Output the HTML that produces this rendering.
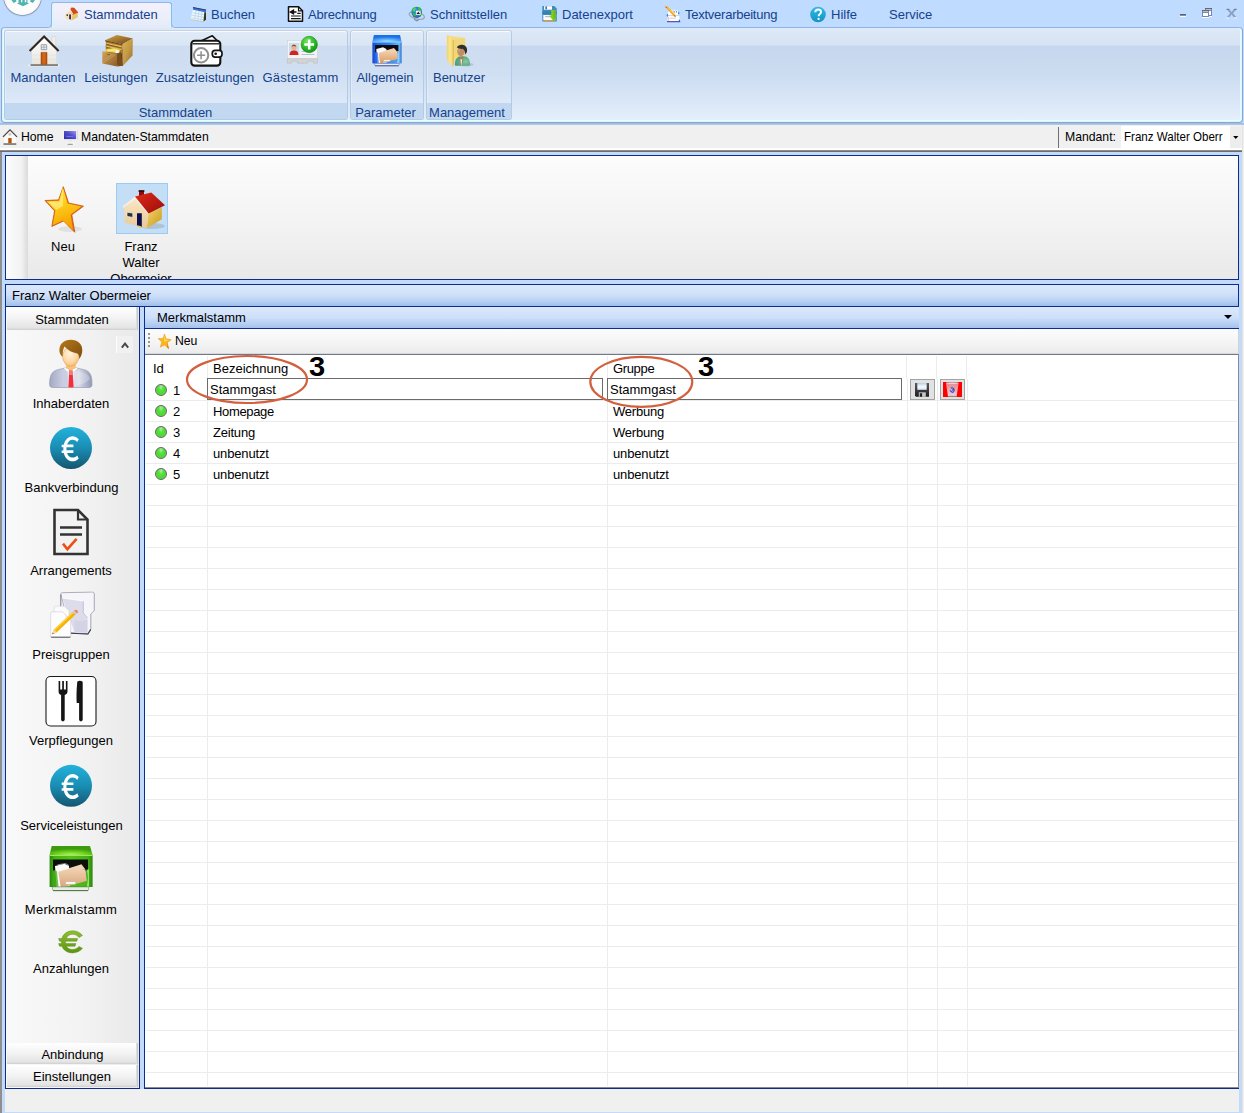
<!DOCTYPE html>
<html><head><meta charset="utf-8">
<style>
*{box-sizing:border-box;margin:0;padding:0}
html,body{width:1244px;height:1113px;overflow:hidden}
body{position:relative;background:#bfdbff;font-family:"Liberation Sans",sans-serif;font-size:13px;color:#000}
.a{position:absolute}
.t{position:absolute;white-space:nowrap;line-height:16px}
.c{position:absolute;white-space:nowrap;line-height:16px;text-align:center}
.rt{color:#15428b}
.seg{font-size:13px;transform:scaleX(.94);transform-origin:0 0}
.grp{border:1px solid #b4cbe6;border-top-color:#c3d2e4;border-radius:3px;background:linear-gradient(rgba(255,255,255,.12),rgba(255,255,255,.06));box-shadow:inset 0 1px 0 rgba(255,255,255,.75),inset 1px 0 0 rgba(255,255,255,.3)}
.grp i{position:absolute;left:0;right:0;bottom:0;height:16px;background:#c1d8f0;border-radius:0 0 2px 2px}
svg{position:absolute;overflow:visible}
.sb{position:absolute;left:7px;width:131px;height:21px;background:linear-gradient(#ffffff,#f4f4f4 45%,#e4e4e4 90%,#cfcfcf);border-right:1px solid #c9c9c9;box-shadow:inset -1px 0 0 #dedede}
.dot{position:absolute;left:155px;width:12px;height:12px;border-radius:50%;background:radial-gradient(ellipse at 50% 18%,#b4ecaa 0,#5be044 32%,#46dc2e 60%,#62ea3e 85%,#7cf04e 100%);border:1px solid #6c626c}
</style></head><body>
<!-- ===== top tab strip ===== -->
<div class="a" style="left:0;top:0;width:1244px;height:125px;background:#bfdbff"></div>
<!-- orb -->
<div class="a" style="left:4px;top:-22px;width:37px;height:37px;border-radius:50%;background:radial-gradient(circle at 50% 62%,#ffffff 0,#fbfbfc 50%,#e3e6ea 72%,#bfc5cf 90%,#9aa2b0 100%);box-shadow:0 0 0 .8px #8e97a8,0 1px 1.500px rgba(90,100,130,.45)"></div>
<svg style="left:10px;top:0" width="26" height="7" viewBox="0 0 26 7"><path d="M1.500 0h4.500l.5 1.500L3.500 3zM8.500 0h2.500v2.200h1.300V0h2.500v2.200h1.500v-2.200h1.200v3l1.800.2-6.300 3-6.300-3 1.800-.2zM20.500 0h4.500l-2.200 3-2.800-1.500z" fill="#4fb5b0"/></svg>
<!-- ribbon body -->
<div class="a" style="left:0;top:123px;width:1244px;height:2px;background:linear-gradient(#9db8df,#b3ccee)"></div>
<div class="a" id="ribbon" style="left:1px;top:27px;width:1242px;height:96px;border:1px solid #8aa6ce;border-top-color:#8fb3e4;border-radius:4px;background:linear-gradient(#dfe9f7 0,#d6e3f3 17px,#c7d8ee 18px,#cbdcf1 45px,#d9e6f7 72px,#e6f0fd 94px);box-shadow:inset 1px 0 0 #cdfdff,inset -1px 0 0 #cdfdff,inset 0 -1px 0 #cdfdff,inset 2px 0 0 #f1f6fd,inset -2px 0 0 #f1f6fd,inset 0 -2px 0 #f4f9fe"></div>
<!-- active tab -->
<div class="a" id="tab" style="left:51px;top:2px;width:121px;height:26px;border:1px solid #92b7e6;border-bottom:none;border-radius:3px 3px 0 0;background:linear-gradient(#f3f0fb,#eceefa 60%,#e2eaf8);box-shadow:inset 1px 0 0 #d4fbff,inset -1px 0 0 #d4fbff"></div>
<svg style="left:46px;top:20px" width="132" height="9" viewBox="46 20 132 9"><path d="M48.500 27.500Q51.500 27.500 51.500 23.500V28.500H48.500z" fill="#e2eaf8"/><path d="M48.500 27.500Q51.500 27.500 51.500 23.500" fill="none" stroke="#92b7e6" stroke-width="1"/><path d="M174.500 27.500Q171.500 27.500 171.500 23.500V28.500H174.500z" fill="#e2eaf8"/><path d="M174.500 27.500Q171.500 27.500 171.500 23.500" fill="none" stroke="#92b7e6" stroke-width="1"/></svg>
<div class="t rt" style="left:84px;top:7px">Stammdaten</div>
<div class="t rt" style="left:211px;top:7px">Buchen</div>
<div class="t rt" style="left:308px;top:7px;letter-spacing:-.15px">Abrechnung</div>
<div class="t rt" style="left:430px;top:7px">Schnittstellen</div>
<div class="t rt" style="left:562px;top:7px">Datenexport</div>
<div class="t rt" style="left:685px;top:7px;letter-spacing:-.25px">Textverarbeitung</div>
<div class="t rt" style="left:831px;top:7px">Hilfe</div>
<div class="t rt" style="left:889px;top:7px">Service</div>
<!-- TABICONS -->
<svg style="left:0;top:0" width="900" height="28" viewBox="0 0 900 28"><defs>
<radialGradient id="tGlobe" cx=".4" cy=".35" r=".7"><stop offset="0" stop-color="#9be070"/><stop offset=".6" stop-color="#3f9a5a"/><stop offset="1" stop-color="#2a6aa8"/></radialGradient>
<linearGradient id="tHelp" x1="0" y1="0" x2="0" y2="1"><stop offset="0" stop-color="#2dbbe8"/><stop offset="1" stop-color="#1593c2"/></linearGradient>
</defs>
<!-- tab house -->
<path d="M71.200 7.600h2.200v3h-2.200z" fill="#b8441c"/>
<path d="M70 9L65.300 14.300 66 19l5.500 1.600 1-6.500z" fill="#f7ddb0"/>
<path d="M72.500 14.100L77.800 12v5.200l-6.300 3.400z" fill="#e9c46a"/>
<path d="M70 8.800l4.200-1 4.200 4.600-6 2.300z" fill="#d24a1c"/>
<path d="M70 8.800L65 14l.5.700L70 10.400l2.500 4 .6-.6z" fill="#f8f0e2"/>
<path d="M69.200 14.500h1.700v5l-1.700-.5z" fill="#14226a"/><path d="M66.500 14.300l1.500.2v1.600l-1.500-.3z" fill="#2a3040"/>
<!-- calendar -->
<path d="M193 9l11.500 2.300v8.200l-1.500 1.700-12.300-2z" fill="#f1f6fb"/>
<path d="M192.600 12.800l11.500 2M192 15.300l12 2M191.400 17.800l12 2M196 10.500l-1.300 9M199 11l-1.300 9.400M202 11.600l-1.200 9.400" stroke="#b5d6ee" stroke-width=".8"/>
<path d="M193 7.200l13 2.600v2.600l-13-2.600z" fill="#3576e2"/>
<path d="M193 7l13 2.600v1l-13-2.600z" fill="#3b3f55"/>
<path d="M204.400 12.100l1.600.3v7.300l-2.600 1.800z" fill="#3e3518"/>
<path d="M190.700 19.200l12.300 2 .5.700-13.300-2z" fill="#c9c2b2"/>
<!-- abrechnung doc -->
<path d="M288.500 6.800h10l4 4V21.300h-14z" fill="#fff" stroke="#111" stroke-width="1.500" stroke-linejoin="round"/>
<path d="M298.500 6.800v4h4" fill="none" stroke="#111" stroke-width="1.200"/>
<path d="M290.500 12h3l0-2 0 0M293.500 10.200v3.600l-3.200-1.800zM293 12h3.500" stroke="#111" stroke-width="1.300" fill="#111"/>
<path d="M297.300 13.300h3.400M291 16h9.700M291 18.700h9.700" stroke="#111" stroke-width="1.200"/>
<!-- globe -->
<ellipse cx="416.800" cy="15.600" rx="7.800" ry="3.400" transform="rotate(14 416.800 15.600)" fill="none" stroke="#a3a6aa" stroke-width="1.300"/>
<path d="M414 19.300l2.800 1.500 2-1" stroke="#8c8f94" stroke-width="1.200" fill="none"/>
<circle cx="416.700" cy="12.100" r="5.400" fill="#2b7bd2"/>
<path d="M412.200 9.300c1-1.500 2.400-2.300 3.600-2.500l.6 1.200-1.600 1.700.6 1.600-1.600 1.200-1.600-.5zM418.200 7c1.600.3 2.800 1.200 3.500 2.400l-1.500 1.200-2.500-1.200zM412.800 13.300l2.200.5 1 2.500-1 1c-1.200-.8-2.200-2.200-2.200-4zM420.800 13.300l1.200-.5c0 1.600-.7 3-1.700 3.900l-1.300-1.400z" fill="#2cc63c"/>
<path d="M412.800 9.500c1.800-1.700 3.600-1.500 4.500-.4-1.400.4-2.600 1.400-3.200 3z" fill="#8ed0f4" opacity=".5"/>
<path d="M415.800 10.600h4.900v4.300h-4.900z" fill="#f0ece6"/><path d="M416.400 14l1.900-2.300 1.800 2.300z" fill="#1c1c1c"/><path d="M419.600 10.800h.9v.9h-.9z" fill="#f08a50"/>
<path d="M413 15.800c2 2 5.500 2 7.500 0" stroke="#1e5aa8" stroke-width="1" fill="none"/>
<!-- floppy + green arrow -->
<path d="M542.300 6.600c0-.4.300-.6.600-.6h11.400l2.500 2.500v12.200c0 .4-.3.700-.7.700h-13.200c-.3 0-.6-.3-.6-.7z" fill="#3f8dc0"/>
<path d="M542.300 11.500h14.500v2.500h-14.500z" fill="#3680b4"/>
<path d="M544 6.200h8v3.500h-8z" fill="#fdfdfd"/><path d="M545.300 6.600h1.700v2.700h-1.700z" fill="#2f7eb2"/>
<path d="M543.300 15h12v5h-12z" fill="#fcfcfc"/><path d="M545 16.700h5" stroke="#a8a8b8" stroke-width=".9"/>
<path d="M543.300 20h12v1.200h-12z" fill="#e09a30"/>
<path d="M551.200 9.900h4.400v5.500h1.500l-3.400 5.800-4.600-5.800h2.100z" fill="#7fcb20"/>
<path d="M553.400 9.900h2.200v5.500h1.500l-3.400 5.800z" fill="#6dbb1c"/>
<!-- text icon -->
<path d="M668 11.500h10.500l1.500 9.700h-13z" fill="#fdfdfe"/>
<path d="M669.500 9.800l.8 2.500M671.800 9.600l.8 2.500M674.300 9.600l.8 2.500M676.700 9.800l.8 2.500" stroke="#fbfbfd" stroke-width="1.100"/>
<path d="M671.300 11.300v1.200M674.300 11.300v1.200M676.500 11.300v1.200" stroke="#3a5ab8" stroke-width=".9"/>
<path d="M667.200 15.500h12.600" stroke="#c6cbe6" stroke-width=".8"/>
<ellipse cx="667.400" cy="15.300" rx=".7" ry="1.500" fill="#2a8cf0"/><ellipse cx="678.700" cy="13" rx=".7" ry="1.500" fill="#2a8cf0"/>
<path d="M668.200 17v4" stroke="#f6a8b0" stroke-width="1"/>
<path d="M669.500 18.300h6" stroke="#c8c8cc" stroke-width=".8"/>
<path d="M667 21.200h13.200v1h-13.200z" fill="#2f3aa6"/><path d="M679 19l1.200 2.200h-1.500z" fill="#2f3aa6"/>
<path d="M665.500 7.300l1.600-1.400 8 8.700-1.600 1.400z" fill="#f3a90c"/><path d="M666.300 6.600l.8-.7 8 8.700-.8.700z" fill="#fbc43a"/>
<path d="M664.300 6.500c.4-.8 1.200-1.200 2-.8l.8.200-1.600 1.400z" fill="#f7b4a4"/><path d="M665.500 7.300l.6-.5.700.8-.6.500z" fill="#4a4a4a"/>
<path d="M673.500 16l1.600-1.400.9 3z" fill="#c9703a"/>
<!-- help -->
<circle cx="818" cy="14.500" r="7.800" fill="url(#tHelp)"/>
<path d="M815.300 12.300c0-1.800 1.300-2.800 2.900-2.800s2.800 1 2.800 2.500c0 2.100-2.400 2.200-2.400 4.200" fill="none" stroke="#fff" stroke-width="1.900"/><circle cx="818.600" cy="18.900" r="1.150" fill="#fff"/>
</svg>
<!-- /TABICONS -->
<!-- window controls -->
<div class="a" style="left:1180px;top:14px;width:6px;height:3px;background:linear-gradient(#60606a 0,#60606a 1px,#8292ad 1px,#8292ad 2px,#fafcff 2px)"></div>
<svg style="left:1201px;top:7px" width="12" height="12" viewBox="1201 7 12 12">
<rect x="1205.500" y="8.500" width="6" height="7" fill="#fff" stroke="#6f87b2" stroke-width="1"/><path d="M1205 8.500h7" stroke="#6b6464" stroke-width="1"/><path d="M1206 9.500h5v1.500h-5z" fill="#6f87b2"/><path d="M1209 16.500h3" stroke="#fafcff" stroke-width="1"/>
<rect x="1202.500" y="10.500" width="6" height="6" fill="#fff" stroke="#6f87b2" stroke-width="1"/><path d="M1202 10.500h7" stroke="#6b6464" stroke-width="1"/><path d="M1203 11.500h5v1.500h-5z" fill="#6f87b2"/><path d="M1202 17.500h7" stroke="#fafcff" stroke-width="1"/>
</svg>
<svg style="left:1225px;top:7px" width="14" height="12" viewBox="1225 7 14 12">
<path d="M1226.500 9h2.700l2.400 2.900 2.400-2.900h2.700l-3.700 4.200 3.700 4.300h-2.700l-2.400-2.900-2.400 2.900h-2.700l3.700-4.300z" fill="#8ba0c2"/>
<path d="M1226.500 9.300h2.700M1234 9.300h2.700" stroke="#676a72" stroke-width=".8"/>
<path d="M1226.300 17.900h3M1233.900 17.900h3" stroke="#fafcff" stroke-width=".9"/>
</svg>
<!-- groups -->
<div class="a grp" style="left:4px;top:30px;width:344px;height:90px"><i></i></div>
<div class="a grp" style="left:350px;top:30px;width:74px;height:90px"><i></i></div>
<div class="a grp" style="left:426px;top:30px;width:86px;height:90px"><i></i></div>
<div class="c rt" style="left:3px;width:80px;top:70px">Mandanten</div>
<div class="c rt" style="left:76px;width:80px;top:70px">Leistungen</div>
<div class="c rt" style="left:150px;width:110px;top:70px">Zusatzleistungen</div>
<div class="c rt" style="left:255.500px;width:90px;top:70px;letter-spacing:.25px">Gästestamm</div>
<div class="c rt" style="left:349px;width:72px;top:70px">Allgemein</div>
<div class="c rt" style="left:426px;width:66px;top:70px">Benutzer</div>
<div class="c rt" style="left:4px;width:343px;top:105px">Stammdaten</div>
<div class="c rt" style="left:349px;width:73px;top:105px">Parameter</div>
<div class="c rt" style="left:425px;width:84px;top:105px">Management</div>
<!-- RIBBONICONS -->
<svg style="left:0;top:0" width="520" height="125" viewBox="0 0 520 125"><defs>
<linearGradient id="rWall" x1="0" y1="0" x2="0" y2="1"><stop offset="0" stop-color="#ffffff"/><stop offset="1" stop-color="#e6e4dc"/></linearGradient>
<linearGradient id="rDoor" x1="0" y1="0" x2="1" y2="0"><stop offset="0" stop-color="#b9500c"/><stop offset=".5" stop-color="#d96a1a"/><stop offset="1" stop-color="#b9500c"/></linearGradient>
<linearGradient id="rWoodT" x1="0" y1="0" x2="1" y2="1"><stop offset="0" stop-color="#cfa24c"/><stop offset=".45" stop-color="#a87a32"/><stop offset="1" stop-color="#70441a"/></linearGradient>
<linearGradient id="rWoodS" x1="0" y1="0" x2="1" y2="1"><stop offset="0" stop-color="#dcb252"/><stop offset=".5" stop-color="#c49a44"/><stop offset="1" stop-color="#946a2a"/></linearGradient>
<linearGradient id="rWoodF" x1="0" y1="0" x2="1" y2="1"><stop offset="0" stop-color="#d2a656"/><stop offset=".5" stop-color="#b08040"/><stop offset="1" stop-color="#8c5a2a"/></linearGradient>
<radialGradient id="rBlueTT" cx=".5" cy="1" r=".75"><stop offset="0" stop-color="#b6ecff"/><stop offset=".45" stop-color="#5cb6fb"/><stop offset="1" stop-color="#1e6ee8"/></radialGradient>
<linearGradient id="rFoldO" x1="0" y1="0" x2="0" y2="1"><stop offset="0" stop-color="#f3d2b2"/><stop offset="1" stop-color="#dc9a5e"/></linearGradient>
<linearGradient id="rBlueT" x1="0" y1="0" x2="0" y2="1"><stop offset="0" stop-color="#1a6fe0"/><stop offset="1" stop-color="#3aa0f8"/></linearGradient>
<linearGradient id="rBlueS" x1="0" y1="0" x2="1" y2="0"><stop offset="0" stop-color="#1546cc"/><stop offset=".12" stop-color="#1e62e0"/><stop offset=".6" stop-color="#2f86ee"/><stop offset=".92" stop-color="#6cbaf6"/><stop offset="1" stop-color="#2a6ad0"/></linearGradient>
<linearGradient id="rFoldY" x1="0" y1="0" x2="1" y2="0"><stop offset="0" stop-color="#f3d260"/><stop offset=".5" stop-color="#fbe690"/><stop offset="1" stop-color="#f2d468"/></linearGradient>
<radialGradient id="rGreenB" cx=".4" cy=".3" r=".8"><stop offset="0" stop-color="#7be660"/><stop offset=".6" stop-color="#24b424"/><stop offset="1" stop-color="#0e8a14"/></radialGradient>
<radialGradient id="rUser" cx=".7" cy=".55" r=".7"><stop offset="0" stop-color="#8cc6a6"/><stop offset=".6" stop-color="#5eae84"/><stop offset="1" stop-color="#4a9c72"/></radialGradient>
</defs>
<!-- Mandanten house 32 @28,35 -->
<path d="M28.500 64.500h31v1.800h-31z" fill="#f4f4f4"/>
<path d="M52 36.600h3.700v10h-3.700z" fill="#f2efe6" stroke="#d2cec0" stroke-width=".5"/>
<path d="M32 50.500L44.100 38.200 56.200 50.500V64.500H32z" fill="url(#rWall)"/>
<path d="M32 55h24.200M32 59.500h24.200" stroke="#e2dfd6" stroke-width=".6"/>
<path d="M30.500 64.300h27.500v1.500h-27.500z" fill="#6b655c"/>
<path d="M29.600 50.900L44.100 36.400 58.600 50.900" fill="none" stroke="#35271e" stroke-width="2.100" stroke-linejoin="miter"/>
<path d="M41 52.400h6v11.900h-6z" fill="url(#rDoor)" stroke="#8e3c06" stroke-width=".5"/>
<path d="M41.200 44.700h5.500v5h-5.500z" fill="#e9edf2" stroke="#8e949c" stroke-width=".8"/><path d="M43.950 44.700v5M41.200 47.200h5.500" stroke="#8e949c" stroke-width=".6"/>
<!-- Leistungen wooden cabinet @102,35 -->
<path d="M105.100 40.300L116.900 35l15.900 3.400-10.400 5.800z" fill="url(#rWoodT)"/>
<path d="M122.400 44.200l10.400-5.800-.3 17.200-9.800 10.500z" fill="url(#rWoodS)"/>
<path d="M105.800 45l16.600 4 .3 17.100-16.500-4z" fill="#5e3c14"/>
<path d="M105.800 40.600l16.600 3.600.2 9.500-16.600-4z" fill="#a87c30"/>
<path d="M105.100 40.300l17.300 3.900v1l-17.300-3.900z" fill="#6e4618"/>
<path d="M106.500 42.700l15 3.400v1.300l-15-3.400zM106.500 45.600l15 3.500v1.300l-15-3.500z" fill="#e2bc5c"/>
<path d="M106.500 44.100l15 3.400v.6l-15-3.400zM106.500 47l15 3.500v.6l-15-3.500z" fill="#6e4a16"/>
<path d="M105.800 49.200l9.500-1.500 5 2.300-1.300 3.400-13.200-1.700z" fill="#e6c63c"/>
<path d="M107 49.500l7.500-1 1 3.500-8.500-.8z" fill="#f6e47a"/>
<path d="M115.300 49.300l3.600.9.300 3.300-3.600-.3z" fill="#f6f6f8"/>
<path d="M102.300 51.300l14.600 2.300.5 12.900-15.100-3.100z" fill="url(#rWoodF)"/>
<path d="M116.900 53.600l4.100-1.700 1.500 13.900-5.100.7z" fill="#7a4c1a"/>
<path d="M102.800 60.500l10-6.500M102.800 63l12.500-8.500" stroke="#e8c890" stroke-width=".8" opacity=".45"/>
<path d="M107 54.300l3 .5" stroke="#5a3c14" stroke-width=".8" opacity=".7"/>
<!-- wallet @190,35 -->
<path d="M201 41L212.300 35.800 217.600 41" fill="#fff" stroke="#141414" stroke-width="1.700" stroke-linejoin="round"/>
<rect x="191.300" y="40.800" width="29" height="24.800" rx="3.300" fill="#fff" stroke="#141414" stroke-width="2.100"/>
<path d="M192.500 43.800h26.500" stroke="#141414" stroke-width="1.300"/>
<circle cx="201.100" cy="55.300" r="7.200" fill="#fff" stroke="#8e8e8e" stroke-width="2"/>
<path d="M201.100 51.300v8M197.100 55.300h8" stroke="#8e8e8e" stroke-width="1.500"/>
<rect x="212.300" y="50.400" width="9.700" height="6.700" rx="2.800" fill="#fff" stroke="#141414" stroke-width="1.700"/>
<circle cx="215.700" cy="53.800" r="1.300" fill="#141414"/>
<!-- Gaestestamm card @287,40 -->
<rect x="287.300" y="40.300" width="30.200" height="18.500" fill="#f3f3f3" stroke="#cfcfcf" stroke-width=".6"/>
<path d="M287.300 58.800h30.200v4.400h-4v-2h-6v2h-10v-2h-6v2h-4.200z" fill="#d4d4d4" stroke="#b8b8b8" stroke-width=".5"/>
<rect x="289" y="43" width="10.200" height="12" fill="#c9dcf2"/>
<circle cx="294" cy="47.600" r="2.700" fill="#e9b48a"/><path d="M291.700 46.800c.3-2.600 4.300-2.600 4.600 0-1.500-1-3-1-4.600 0z" fill="#7a4a20"/>
<path d="M289.600 55c0-3.500 1.800-4.600 4.400-4.600s4.400 1.100 4.400 4.600z" fill="#d32222"/>
<path d="M301.500 54.500h13M301.500 51.500h8" stroke="#9ab4dc" stroke-width=".8"/>
<circle cx="309.200" cy="44.500" r="8.200" fill="url(#rGreenB)" stroke="#0d7a12" stroke-width=".5"/>
<path d="M309.200 39.600v9.800M304.300 44.500h9.800" stroke="#fff" stroke-width="2.500"/>
<!-- Allgemein blue cabinet @372,35 -->
<path d="M373.900 35h26.100l1.600 6.800h-29.200z" fill="url(#rBlueTT)"/>
<path d="M372.400 41.800h29.200v21.600h-29.200z" fill="url(#rBlueS)"/>
<path d="M372.400 41.800h29.200v.8h-29.200z" fill="#8fd0ff"/>
<path d="M375.100 45h23.300v7.500h-23.300z" fill="#0a0c12"/>
<path d="M376.300 49l6.700-1.800 3.400 1.700.4 14.200-9.600.3z" fill="#fbfbfb"/>
<path d="M385.900 50.600l8.100-2.700 2.500 3-9.500 2.400z" fill="#f1cfae"/>
<path d="M378.500 52.900l7.400-2.300 10.900.5 1 8-17.600 4.300z" fill="url(#rFoldO)"/>
<path d="M383.600 59.700h6.700v1.800h-6.700z" fill="#fbfbfb" stroke="#b98a5a" stroke-width=".35"/>
<path d="M374.800 53c1.300-1.400 2.700-1.400 3 0l1 10.300h-4z" fill="#2a6ae8" opacity=".75"/>
<path d="M390 61.500l8.400-3v4.900h-17z" fill="#4a98f0" opacity=".7"/>
<path d="M397 51c1.200 3.500 1.200 8.200.1 12.300l1.600.1v-12.400z" fill="#bfe4ff" opacity=".8"/>
<path d="M374.400 63.400h24.900l-.5 2c-.1.400-.3.500-.7.500h-22.500c-.4 0-.6-.1-.7-.5z" fill="#ecedf0" stroke="#2c54a8" stroke-width=".45"/>
<path d="M375 65.700h23.700" stroke="#2a3f8a" stroke-width=".7"/>
<!-- Benutzer folder+user @447,35 -->
<path d="M446.900 35.200l18.300 2.900v17.500l-12.400 5.400z" fill="#f4dc86"/>
<path d="M452.800 39.800l12.400-1.700v17.500l-12.400 5.400z" fill="#f1d77c"/>
<path d="M446.900 35.200l5.900 4.600v27l-5.900-6.800z" fill="url(#rFoldY)"/>
<path d="M452.800 39.800l.9.300v24.500l-.9 2.200z" fill="#dcb548"/>
<ellipse cx="466" cy="64.600" rx="7.500" ry="1.800" fill="#3a4660" opacity=".18"/>
<path d="M454.900 64.800c0-5.600 2.500-8.500 6.500-8.500h2.200c4.200 0 6.500 3 6.500 8.300 0 .8-.5 1.200-1.300 1.200h-12.600c-.8 0-1.300-.3-1.300-1z" fill="url(#rUser)"/>
<path d="M459.300 56.400l2 1.500 1.800-1.500 .3 1.500-1.600 7.500h-.8l-1.900-7.500z" fill="#a9774e"/>
<path d="M460.300 58.600l1 .8 1-.8-.8 6.800h-.5z" fill="#dcece6"/>
<ellipse cx="460.900" cy="51.200" rx="3.600" ry="5.100" fill="#bf8e66"/>
<path d="M458.300 48.500c1.500-1.300 2.800-1.200 3.600-.3-1.200.7-2.300 2.200-2.700 4.500-.8-1-1.200-2.600-.9-4.200z" fill="#dab08a" opacity=".6"/>
<path d="M456.800 47.300c1-1.800 3.200-2.700 5.300-2.500 3 .3 5.200 2.600 5 5.600-.1 1.800-.9 3.100-2.100 4.200.3-2.600-.6-4.700-2.300-5.800-1.900.3-4 0-5.900-1.500z" fill="#2e2e30"/>
</svg>
<!-- /RIBBONICONS -->
<!-- ===== breadcrumb ===== -->
<div class="a" style="left:0;top:125px;width:1244px;height:25px;background:linear-gradient(#f0f0f0 0,#f0f0f0 22.500px,#fdfdfd 23px,#fff 25px)"></div>
<div class="a" style="left:0;top:150px;width:1243px;height:2px;background:linear-gradient(#8d8d8d 0,#8d8d8d 1px,#6c6c6c 1px)"></div>
<div class="t seg" style="left:21px;top:129px">Home</div>
<div class="t seg" style="left:80.500px;top:129px">Mandaten-Stammdaten</div>
<div class="a" style="left:1058px;top:127px;width:1px;height:21px;background:#6f6f6f"></div>
<div class="t seg" style="left:1064.500px;top:129px">Mandant:</div>
<div class="a" style="left:1121px;top:126px;width:109px;height:23px;background:#fff"></div>
<div class="a" style="left:1230px;top:127px;width:11px;height:21px;background:#ededed"></div>
<div class="t seg" style="left:1124px;top:129px;transform:scaleX(.89)">Franz Walter Oberr</div>
<svg style="left:1232.500px;top:136px" width="5.500" height="3" viewBox="0 0 7 4"><path d="M0 0h7l-3.5 4z" fill="#000"/></svg>
<!-- CRUMBICONS -->
<svg style="left:0;top:125px" width="90" height="26" viewBox="0 125 90 26">
<!-- home -->
<path d="M13.300 129.500h1.300v3h-1.300z" fill="#ecebe6"/>
<path d="M4.300 136.800L10 131l5.700 5.800v6.700H4.300z" fill="#fcfbf8"/>
<circle cx="9.900" cy="134.200" r="1.500" fill="#c9c9c9"/>
<path d="M3 136.900L10 129.900l7 7" fill="none" stroke="#454545" stroke-width="1.300"/>
<path d="M8.200 138h3.500v5.500H8.200z" fill="#c95f14"/><path d="M9.100 138.600h1.700v4.500h-1.700z" fill="#b04e0c"/>
<path d="M3.500 143.200h12.800v1.700H3.500z" fill="#7c7a76"/>
<!-- monitor -->
<defs><linearGradient id="cMon" x1="0" y1="1" x2="1" y2="0"><stop offset="0" stop-color="#2f2fa4"/><stop offset=".5" stop-color="#4a4acc"/><stop offset="1" stop-color="#9a9aec"/></linearGradient></defs>
<path d="M62.500 130h15.300v10H62.500z" fill="#f5f3ee"/>
<path d="M77.200 130h.7v10h-.7z" fill="#d8d6d0"/>
<path d="M64 131h12.100v8.100H64z" fill="url(#cMon)"/>
<path d="M66 136l2 .8 3-.5 2.500.7" stroke="#8c8cf0" stroke-width=".7" fill="none"/>
<path d="M69 140h3v2.500h-3z" fill="#eceae6"/>
<path d="M66.700 142.300h7.800l.8 2.400H66z" fill="#f7f6f3"/>
<path d="M67.600 144.300h5.200" stroke="#808080" stroke-width=".9"/>
</svg>
<!-- /CRUMBICONS -->
<!-- ===== workspace ===== -->
<div class="a" style="left:0;top:152px;width:1244px;height:961px;background:#c3daf9"></div>
<div class="a" style="left:0;top:152px;width:2px;height:961px;background:#8f8f8f"></div>
<div class="a" style="left:1242px;top:125px;width:2px;height:988px;background:linear-gradient(90deg,#dcdcdc,#f6f6f6)"></div>
<!-- icon panel -->
<div class="a" style="left:5px;top:155px;width:1234px;height:125px;border:1px solid #0a2d8e;background:linear-gradient(#fcfcfc,#f4f4f4 50%,#e9e9e9)"></div>
<div class="a" style="left:6px;top:156px;width:22px;height:123px;background:linear-gradient(90deg,#fcfcfc,#f2f2f2 70%,#dadada)"></div>
<div class="a" style="left:116px;top:183px;width:52px;height:51px;background:#c4def6;border:1px solid #9bcbf5"></div>
<div class="c" style="left:33px;width:60px;top:239px">Neu</div>
<div class="a" style="left:100px;top:239px;width:82px;height:40px;overflow:hidden;text-align:center;line-height:16px">Franz<br>Walter<br>Obermeier</div>
<!-- PANELICONS -->
<svg width="0" height="0" style="left:0;top:0"><defs>
<linearGradient id="gStar" x1="0" y1="0" x2="0.3" y2="1"><stop offset="0" stop-color="#ffe94a"/><stop offset=".45" stop-color="#ffcf1c"/><stop offset="1" stop-color="#f6a200"/></linearGradient>
<linearGradient id="gRoof" x1="0" y1="0" x2="1" y2="1"><stop offset="0" stop-color="#e02a1a"/><stop offset="1" stop-color="#9a0c08"/></linearGradient>
<linearGradient id="gWall" x1="0" y1="0" x2="0" y2="1"><stop offset="0" stop-color="#fbe9c8"/><stop offset="1" stop-color="#e9c996"/></linearGradient>
<linearGradient id="gSideW" x1="0" y1="0" x2="1" y2="1"><stop offset="0" stop-color="#f4d66a"/><stop offset="1" stop-color="#c9981c"/></linearGradient>
<linearGradient id="gEuro" x1="0" y1="0" x2="0" y2="1"><stop offset="0" stop-color="#22b2dc"/><stop offset=".5" stop-color="#1a8db4"/><stop offset="1" stop-color="#14566f"/></linearGradient>
<linearGradient id="gBody" x1="0" y1="0" x2="1" y2="0"><stop offset="0" stop-color="#a3a8c2"/><stop offset=".3" stop-color="#c9cce0"/><stop offset=".7" stop-color="#d4d7e6"/><stop offset="1" stop-color="#9297b6"/></linearGradient>
<linearGradient id="gHair" x1="0" y1="0" x2="1" y2="1"><stop offset="0" stop-color="#b57a1c"/><stop offset="1" stop-color="#7d4c0e"/></linearGradient>
<radialGradient id="gFace" cx=".45" cy=".35" r=".7"><stop offset="0" stop-color="#fff3e2"/><stop offset=".6" stop-color="#ffd9a6"/><stop offset="1" stop-color="#f8b96a"/></radialGradient>
<radialGradient id="gGreenT" cx=".5" cy="1" r=".7"><stop offset="0" stop-color="#b4f06a"/><stop offset=".5" stop-color="#74d41c"/><stop offset="1" stop-color="#3a9c0e"/></radialGradient>
<linearGradient id="gGreenC" x1="0" y1="0" x2="0" y2="1"><stop offset="0" stop-color="#7ddc2c"/><stop offset="1" stop-color="#2f9410"/></linearGradient>
<linearGradient id="gGreenS" x1="0" y1="0" x2="1" y2="0"><stop offset="0" stop-color="#2a860c"/><stop offset=".12" stop-color="#46b016"/><stop offset=".5" stop-color="#52c01a"/><stop offset=".9" stop-color="#44ae14"/><stop offset="1" stop-color="#2a860c"/></linearGradient>
<linearGradient id="gFold" x1="0" y1="0" x2="0" y2="1"><stop offset="0" stop-color="#f2d2b2"/><stop offset="1" stop-color="#d6a67c"/></linearGradient>
<linearGradient id="gGE" x1="0" y1="0" x2="0" y2="1"><stop offset="0" stop-color="#8fc02c"/><stop offset="1" stop-color="#5c9410"/></linearGradient>
<linearGradient id="gPaper" x1="0" y1="0" x2="1" y2="1"><stop offset="0" stop-color="#fbfbfd"/><stop offset="1" stop-color="#c9c9d8"/></linearGradient>
</defs></svg><svg style="left:0;top:0" width="200" height="280" viewBox="0 0 200 280">
<ellipse cx="70" cy="229" rx="12" ry="3" fill="#000" opacity=".07"/>
<path d="M63.3 186.7L68.6 203 83.5 206.2 71.8 214.8 74.8 232.3 63.6 221 51.8 226.4 54.6 210.9 45 200.5 58.5 199.9z" fill="#e4680e" stroke="#c8560a" stroke-width=".8" stroke-linejoin="round"/>
<path d="M62.9 187.6L67.6 203.6 81.5 206.6 70.6 214.6 73 230 63 220.4 52.6 225.3 55.4 210.7 46.6 201.3 59 200.7z" fill="url(#gStar)"/>
<path d="M62.9 189L59.8 201.4 48.5 201.9 56.2 209.8 63 206z" fill="#fff7a8" opacity=".55"/>
<!-- house 48 -->
<ellipse cx="152" cy="226" rx="13" ry="3" fill="#000" opacity=".12"/>
<path d="M139 190.6h5v5.5h-5z" fill="#8c0c0a"/><path d="M138.6 190.2h5.8v1.6h-5.8z" fill="#2a0d0a"/>
<path d="M148.5 213.1L161.8 207.6V219.3L146.8 228.3z" fill="url(#gSideW)"/>
<path d="M135 196.8L124.2 207.4 124.7 222.7 146.8 228.3 148.5 213.1z" fill="url(#gWall)"/>
<path d="M135 196.6L122.6 206.4 123.4 207.8 135 199 148 214 149 212.6z" fill="#f7f1e6"/>
<path d="M135 196.6L151.3 192.5 165 205.3 148.6 213.4z" fill="url(#gRoof)"/>
<path d="M137 213.2h4.8V226.8L137 225.6z" fill="#0b0e52"/>
<path d="M127 212.2l5.8.9v4.3l-5.8-1z" fill="#2a3138" stroke="#f3f3f3" stroke-width=".7"/>
<path d="M137.5 226l3.5.8" stroke="#e8c83a" stroke-width="1.3"/>
</svg>
<!-- /PANELICONS -->
<!-- title bar -->
<div class="a" style="left:5px;top:284px;width:1234px;height:23px;border:1px solid #0a2d8e;background:linear-gradient(#dce9fb,#cfe0f9 45%,#b9d2f4 75%,#9fbeea)"></div>
<div class="t" style="left:12px;top:288px">Franz Walter Obermeier</div>
<!-- ===== sidebar ===== -->
<div class="a" style="left:5px;top:306px;width:135px;height:783px;border:1px solid #0a2d8e;background:linear-gradient(90deg,#f9f9f9,#f2f2f2 60%,#e9e9e9)"></div>
<div class="sb" style="left:7px;width:131px;top:307px;height:23px"></div>
<div class="c" style="left:7px;width:130px;top:312px">Stammdaten</div>
<div class="a" style="left:116px;top:336px;width:17px;height:17px;background:#f1f1f1;border-left:1px solid #fdfdfd"></div>
<svg style="left:120.500px;top:341.500px" width="8" height="6.500" viewBox="0 0 8 6.500"><path d="M.8 5.700L4 1.700l3.200 4" fill="none" stroke="#484848" stroke-width="2"/></svg>
<div class="c" style="left:7px;width:128px;top:396px">Inhaberdaten</div>
<div class="c" style="left:7px;width:129px;top:480px">Bankverbindung</div>
<div class="c" style="left:7px;width:128px;top:563px">Arrangements</div>
<div class="c" style="left:7px;width:128px;top:647px">Preisgruppen</div>
<div class="c" style="left:7px;width:128px;top:733px">Verpflegungen</div>
<div class="c" style="left:7px;width:129px;top:818px">Serviceleistungen</div>
<div class="c" style="left:7px;width:128px;top:902px;letter-spacing:.3px">Merkmalstamm</div>
<div class="c" style="left:7px;width:128px;top:961px">Anzahlungen</div>
<div class="sb" style="left:7px;width:131px;top:1043px"></div>
<div class="sb" style="left:7px;width:131px;top:1065px;height:22px"></div>
<div class="c" style="left:7px;width:131px;top:1047px">Anbindung</div>
<div class="c" style="left:7px;width:130px;top:1069px">Einstellungen</div>
<!-- SIDEICONS -->
<svg style="left:0;top:300" width="145" height="700" viewBox="0 300 145 700">
<!-- person -->
<path d="M49.6 384.5c0-9 2-13.500 9-15l7.500-1.700h9.800l7.500 1.700c7 1.500 8.600 6 8.600 15 0 2-1 3-3 3H52.600c-2 0-3-1-3-3z" fill="url(#gBody)" stroke="#8f93ad" stroke-width=".6"/>
<path d="M75 371c8 1 14 3 15 8-4 4-10 6-16 8z" fill="#fff" opacity=".25"/>
<path d="M65.500 367.600l5.200 3.200 5.200-3.200 1.500.6-3.600 3.600h-6.200l-3.600-3.600z" fill="#fff"/>
<path d="M67.600 371l.6 16.500h5.800l.5-16.500-3.800 1.300z" fill="#eef0f8" opacity=".8"/><path d="M69.500 369.500h2.500l.5 1.600 1.200 16.400h-5.300l.8-16.400z" fill="#f2303c"/>
<path d="M69.500 369.500h2.500l.5 1.600.3 4h-3.800l.2-4z" fill="#f78a90" opacity=".8"/>
<path d="M65.900 362h9.800v6.200l-4.900 2.400-4.900-2.400z" fill="#f6c27a"/>
<ellipse cx="70.700" cy="356.600" rx="8.100" ry="9.600" fill="url(#gFace)" stroke="#d99a52" stroke-width=".5"/>
<path d="M59.400 351c-.4-7 4.600-11.200 11.300-11.200 7 0 11.800 4.200 11.600 10.600-.1 3.600-1.600 6.600-3.200 8.600.3-3-.2-4.600-1.600-5.600-5.200-.8-9.600-3.200-13-7-1.600 3-1.900 6.200-1.900 10.400-1.800-1.400-3-3.400-3.200-5.800z" fill="url(#gHair)"/>
<!-- euro circle 1 -->
<circle cx="71" cy="448" r="21" fill="url(#gEuro)"/>
<path transform="translate(70.2 447.7) scale(.82 1.04) translate(-70.6 -447.7)" d="M81 439.600c-2.200-2-4.800-3-7.600-3-5.200 0-9.200 3.400-10.600 8.200h-2.600v2.500h2.100c-.1 1.100-.1 2.100 0 3h-2.100v2.500h2.600c1.400 4.800 5.400 8 10.600 8 2.800 0 5.400-1 7.600-2.800l-1.900-2.900c-1.600 1.300-3.500 2.100-5.600 2.100-3.200 0-5.600-1.800-6.700-4.500h7.700v-2.500h-8.400c-.1-1-.1-2 0-3h8.400v-2.500h-7.700c1.100-2.800 3.500-4.700 6.700-4.700 2.100 0 4 .8 5.600 2.300z" fill="#fff"/>
<!-- doc check -->
<path d="M54.500 510h23.500l9.500 9.500v34.500h-33z" fill="#f2f2f2" stroke="#333" stroke-width="2.600" stroke-linejoin="miter"/>
<path d="M78 510v9.500h9.500" fill="none" stroke="#333" stroke-width="2.200"/>
<path d="M60 527.500h22M60 534.500h22" stroke="#333" stroke-width="2.400"/>
<path d="M63 543.600l4.400 5.600 9.200-10.400" fill="none" stroke="#f04e14" stroke-width="2.600"/>
<!-- preisgruppen -->
<path d="M61.300 594.500c0-1 .6-1.700 1.600-1.700l29.500-.8c1.200 0 2 .8 2 2v16.200l-3.300 3.500v15.500l-3 5.200-17.400-1z" fill="#55556a" opacity=".55"/>
<path d="M60.800 594c0-.8.600-1.300 1.400-1.300l30-.6c1.200 0 2 .6 2 1.800v16.800l-3.400 3.300v15l-2.900 4.600-17.200-.8z" fill="#f6f6fa" stroke="#9a9aae" stroke-width=".7"/>
<path d="M70.700 633.200l17.200.8 2.900-4.600" fill="none" stroke="#3c3c4a" stroke-width="1.100"/><path d="M60.800 594.500v11.700" stroke="#6a6a80" stroke-width=".9"/>
<path d="M62.400 598l20.900 3v12.100l4.100 4.700v14.900l-13-.9z" fill="#dcdcea"/>
<path d="M83.300 601.100v12l4.100 4.700" fill="none" stroke="#b9b9d0" stroke-width=".8"/>
<path d="M74.400 620c4 1.500 9 1.500 13-.3v13l-13-.9z" fill="#cfcfe2" opacity=".7"/>
<path d="M62.400 598l20.900 3" stroke="#fff" stroke-width=".8"/>
<path d="M54.100 607.500c0-.8.500-1.300 1.300-1.300h9l4.800 4.600v20.200h-15.100z" fill="#fbfbfc" stroke="#c9c9d2" stroke-width=".5"/>
<path d="M50.700 636.200c0 .9.500 1.500 1.400 1.500h17.300c.8 0 1.300-.6 1.300-1.500z" fill="#2c2c32" opacity=".8"/>
<path d="M50.700 613.200c0-.8.500-1.300 1.300-1.300h10.500l8.200 7.500v17.100H50.700z" fill="#fdfdfd" stroke="#c4c4cc" stroke-width=".5"/>
<path d="M62.500 611.900c2 1 3 3 2.800 6.300l5.400 1.200z" fill="#ececf0"/>
<path d="M52.200 634.200l1.700-4.700 18.800-17.600 2.800 2.700-18.700 17.600z" fill="#f6b300"/>
<path d="M53.900 629.500l18.800-17.600 1 .9-18.900 17.700z" fill="#ffd24a"/>
<path d="M72.700 611.900l1.400-1.300 2.800 2.700-1.400 1.300z" fill="#c8c8cc"/>
<path d="M74.100 610.600c.9-.9 2.400-1.100 3.300-.2s.8 2.200-.3 3z" fill="#f2805e"/>
<path d="M52.200 634.200l1.700-4.700 2.900 2.900z" fill="#f4d9b0"/><path d="M52.200 634.200l.6-1.600 1 1z" fill="#6a4a3a"/>
<!-- fork knife -->
<rect x="46" y="676.500" width="50" height="49.500" rx="4.500" fill="#fff" stroke="#1a1a1a" stroke-width="1.100"/>
<path d="M58.600 681h1.600v8.500h2v-8.500h1.700v8.500h2v-8.500h1.600v10.500c0 2-1.200 3-2.800 3.400V719.500c0 1.200-.8 1.800-1.800 1.800s-1.800-.6-1.800-1.800V694.900c-1.600-.4-2.500-1.400-2.500-3.400z" fill="#151515"/>
<path d="M77.200 682.500c0-1 .8-1.700 2.600-1.700 1.900 0 2.900.7 2.900 1.700V719.500c0 1.200-.8 1.800-1.800 1.800s-1.800-.6-1.800-1.800V703h-2.400c-.4-6-.2-13 .5-20.500z" fill="#151515"/>
<!-- euro circle 2 -->
<g transform="translate(0 337.800)">
<circle cx="71" cy="448" r="21" fill="url(#gEuro)"/>
<path transform="translate(70.2 447.7) scale(.82 1.04) translate(-70.6 -447.7)" d="M81 439.600c-2.200-2-4.800-3-7.600-3-5.200 0-9.200 3.400-10.600 8.200h-2.600v2.500h2.100c-.1 1.100-.1 2.100 0 3h-2.100v2.500h2.600c1.400 4.800 5.400 8 10.600 8 2.800 0 5.400-1 7.600-2.800l-1.900-2.900c-1.600 1.300-3.500 2.100-5.600 2.100-3.200 0-5.600-1.800-6.700-4.500h7.700v-2.500h-8.400c-.1-1-.1-2 0-3h8.400v-2.500h-7.700c1.100-2.800 3.500-4.700 6.700-4.700 2.100 0 4 .8 5.600 2.300z" fill="#fff"/>
</g>
<!-- green cabinet -->
<path d="M51.700 846h38.300l2.600 9.100h-43z" fill="url(#gGreenT)"/>
<path d="M49.600 855.100h43v31.800h-43z" fill="url(#gGreenS)"/>
<path d="M49.600 855.100h43v1h-43z" fill="#9be85a"/>
<path d="M53 859.500h35v11h-35z" fill="#0c0f0a"/>
<path d="M55 866l9.500-2.300 4.500 2.300.8 20.500-13.300.5z" fill="#fbfbfb"/>
<path d="M57.500 864.800l8-1.300 3.500 2" stroke="#d8d8d8" stroke-width=".6" fill="none"/>
<path d="M68.800 868.200l12.700-3.900 3.600 4.600-14 3.300z" fill="#f0d3b8"/>
<path d="M58.200 871.800l11-3.400 16.100.8 1.600 12-26.100 6.200z" fill="url(#gFold)"/>
<path d="M65.500 881.700h10.200v2.600h-10.200z" fill="#fdfdfd" stroke="#b9a08a" stroke-width=".4"/>
<path d="M52.500 872c2-2 4-2 4.500 0l1.500 14.800h-6z" fill="#3fa814" opacity=".75"/>
<path d="M76 884.500l12.500-4.500v6.900h-25z" fill="#4cb81c" opacity=".7"/>
<path d="M86.500 869.500c1.800 5 1.800 11.500.2 17.300l2.300.1v-17.400z" fill="#a6ec86" opacity=".8"/>
<path d="M52.200 886.900h36.800l-.6 3.200c-.1.500-.4.700-.9.700H53.700c-.5 0-.8-.2-.9-.7z" fill="#e9ebe9" stroke="#4a7a3c" stroke-width=".5"/>
<path d="M53 890.500h35" stroke="#3c6a30" stroke-width=".8"/>
<!-- green euro -->
<path d="M82.500 935.500c-2.600-3.200-6-4.700-10-4.700-5.400 0-9.300 3.200-10.600 7.700h-3.300l.9 2.700h2c-.1.800-.1 1.600 0 2.400h-2.900l.9 2.700h2.500c1.400 4 5.200 6.600 10.500 6.600 4 0 7.600-1.600 10-4.600l-3.500-1.900c-1.600 1.900-3.900 3-6.500 3-3 0-5.100-1.200-6.100-3.100h8.600l.9-2.700h-10.300c-.1-.8-.1-1.600 0-2.400h11.200l.9-2.700h-11.400c1-2.400 3.200-4.200 6.200-4.200 2.600 0 4.900 1.200 6.500 3.200z" fill="url(#gGE)" stroke="#517f12" stroke-width=".4"/>
</svg>
<!-- /SIDEICONS -->
<!-- ===== main panel ===== -->
<div class="a" id="main" style="left:144px;top:306px;width:1095px;height:783px;border:1px solid #0a2d8e;border-right:none;background:#fff"></div>
<div class="a" style="left:1238px;top:354px;width:1px;height:734px;background:#868b96"></div>
<div class="a" style="left:1238px;top:329px;width:1px;height:25px;background:#d2d2d2"></div>
<div class="a" style="left:145px;top:1087px;width:1093px;height:1px;background:#8a8a8a"></div>
<div class="a" style="left:145px;top:307px;width:1094px;height:22px;background:linear-gradient(#dce9fb,#cddffa 50%,#b7d0f3 78%,#a5c2ec);border-bottom:1px solid #0a2d8e"></div>
<div class="t" style="left:157px;top:310px">Merkmalstamm</div>
<svg style="left:1224px;top:315px" width="8" height="4" viewBox="0 0 8 4"><path d="M0 0h8l-4 4z" fill="#000"/></svg>
<div class="a" style="left:145px;top:329px;width:1093px;height:25px;background:linear-gradient(#fcfcfc,#f5f5f5 50%,#ebebeb)"></div>
<div class="a" style="left:148px;top:333px;width:2px;height:14px;background:repeating-linear-gradient(#979797 0,#979797 2px,transparent 2px,transparent 4px)"></div>
<div class="t seg" style="left:175px;top:333px">Neu</div>
<div class="a" style="left:145px;top:354px;width:1093px;height:1px;background:#6f7888"></div>
<div class="a" style="left:145px;top:353px;width:1093px;height:1px;background:#d6d8dc"></div>
<!-- GRID -->
<div class="a" style="left:146px;top:400px;width:1091px;height:1px;background:#ececec"></div>
<div class="a" style="left:146px;top:421px;width:1091px;height:1px;background:#ececec"></div>
<div class="a" style="left:146px;top:442px;width:1091px;height:1px;background:#ececec"></div>
<div class="a" style="left:146px;top:463px;width:1091px;height:1px;background:#ececec"></div>
<div class="a" style="left:146px;top:484px;width:1091px;height:1px;background:#ececec"></div>
<div class="a" style="left:146px;top:505px;width:1091px;height:1px;background:#ececec"></div>
<div class="a" style="left:146px;top:526px;width:1091px;height:1px;background:#ececec"></div>
<div class="a" style="left:146px;top:547px;width:1091px;height:1px;background:#ececec"></div>
<div class="a" style="left:146px;top:568px;width:1091px;height:1px;background:#ececec"></div>
<div class="a" style="left:146px;top:589px;width:1091px;height:1px;background:#ececec"></div>
<div class="a" style="left:146px;top:610px;width:1091px;height:1px;background:#ececec"></div>
<div class="a" style="left:146px;top:631px;width:1091px;height:1px;background:#ececec"></div>
<div class="a" style="left:146px;top:652px;width:1091px;height:1px;background:#ececec"></div>
<div class="a" style="left:146px;top:673px;width:1091px;height:1px;background:#ececec"></div>
<div class="a" style="left:146px;top:694px;width:1091px;height:1px;background:#ececec"></div>
<div class="a" style="left:146px;top:715px;width:1091px;height:1px;background:#ececec"></div>
<div class="a" style="left:146px;top:736px;width:1091px;height:1px;background:#ececec"></div>
<div class="a" style="left:146px;top:757px;width:1091px;height:1px;background:#ececec"></div>
<div class="a" style="left:146px;top:778px;width:1091px;height:1px;background:#ececec"></div>
<div class="a" style="left:146px;top:799px;width:1091px;height:1px;background:#ececec"></div>
<div class="a" style="left:146px;top:820px;width:1091px;height:1px;background:#ececec"></div>
<div class="a" style="left:146px;top:841px;width:1091px;height:1px;background:#ececec"></div>
<div class="a" style="left:146px;top:862px;width:1091px;height:1px;background:#ececec"></div>
<div class="a" style="left:146px;top:883px;width:1091px;height:1px;background:#ececec"></div>
<div class="a" style="left:146px;top:904px;width:1091px;height:1px;background:#ececec"></div>
<div class="a" style="left:146px;top:925px;width:1091px;height:1px;background:#ececec"></div>
<div class="a" style="left:146px;top:946px;width:1091px;height:1px;background:#ececec"></div>
<div class="a" style="left:146px;top:967px;width:1091px;height:1px;background:#ececec"></div>
<div class="a" style="left:146px;top:988px;width:1091px;height:1px;background:#ececec"></div>
<div class="a" style="left:146px;top:1009px;width:1091px;height:1px;background:#ececec"></div>
<div class="a" style="left:146px;top:1030px;width:1091px;height:1px;background:#ececec"></div>
<div class="a" style="left:146px;top:1051px;width:1091px;height:1px;background:#ececec"></div>
<div class="a" style="left:146px;top:1072px;width:1091px;height:1px;background:#ececec"></div>
<div class="a" style="left:207px;top:356px;width:1px;height:23px;background:#ececec"></div>
<div class="a" style="left:207px;top:379px;width:1px;height:707px;background:#ececec"></div>
<div class="a" style="left:607px;top:356px;width:1px;height:23px;background:#ececec"></div>
<div class="a" style="left:607px;top:379px;width:1px;height:707px;background:#ececec"></div>
<div class="a" style="left:906px;top:356px;width:1px;height:23px;background:#ececec"></div>
<div class="a" style="left:907px;top:379px;width:1px;height:707px;background:#ececec"></div>
<div class="a" style="left:936px;top:356px;width:1px;height:23px;background:#ececec"></div>
<div class="a" style="left:937px;top:379px;width:1px;height:707px;background:#ececec"></div>
<div class="a" style="left:966px;top:356px;width:1px;height:23px;background:#ececec"></div>
<div class="a" style="left:967px;top:379px;width:1px;height:707px;background:#ececec"></div>
<div class="t" style="left:153px;top:361px">Id</div>
<div class="t" style="left:213px;top:361px">Bezeichnung</div>
<div class="t" style="left:613px;top:361px;letter-spacing:-.35px">Gruppe</div>
<div class="dot" style="top:384px"></div>
<div class="t" style="left:173px;top:383px">1</div>
<div class="a" style="left:207px;top:378px;width:396px;height:22px;border:1px solid #6b6b6b;background:#fff"></div>
<div class="a" style="left:607px;top:378px;width:295px;height:22px;border:1px solid #6b6b6b;background:#fff"></div>
<div class="t" style="left:210px;top:382px">Stammgast</div>
<div class="t" style="left:610px;top:382px">Stammgast</div>
<div class="dot" style="top:405px"></div>
<div class="t" style="left:173px;top:404px">2</div>
<div class="t" style="left:213px;top:404px;letter-spacing:-.35px">Homepage</div>
<div class="t" style="left:613px;top:404px;letter-spacing:-.2px">Werbung</div>
<div class="dot" style="top:426px"></div>
<div class="t" style="left:173px;top:425px">3</div>
<div class="t" style="left:213px;top:425px;letter-spacing:-.2px">Zeitung</div>
<div class="t" style="left:613px;top:425px;letter-spacing:-.2px">Werbung</div>
<div class="dot" style="top:447px"></div>
<div class="t" style="left:173px;top:446px">4</div>
<div class="t" style="left:213px;top:446px;letter-spacing:-.15px">unbenutzt</div>
<div class="t" style="left:613px;top:446px;letter-spacing:-.15px">unbenutzt</div>
<div class="dot" style="top:468px"></div>
<div class="t" style="left:173px;top:467px">5</div>
<div class="t" style="left:213px;top:467px;letter-spacing:-.15px">unbenutzt</div>
<div class="t" style="left:613px;top:467px;letter-spacing:-.15px">unbenutzt</div>
<div class="a" style="left:910px;top:379px;width:25px;height:21px;border:1px solid #a3a3a3;background:#e2e2e2"></div>
<div class="a" style="left:940px;top:379px;width:25px;height:21px;border:1px solid #a3a3a3;background:#e2e2e2"></div>
<div class="a" style="left:943px;top:382px;width:19px;height:15px;background:#fe0000"></div>
<svg style="left:0;top:0" width="1244" height="1113" viewBox="0 0 1244 1113"><ellipse cx="247" cy="379.5" rx="60" ry="23.5" fill="none" stroke="#d2603f" stroke-width="2.2"/><ellipse cx="641.3" cy="381.8" rx="51" ry="25" fill="none" stroke="#d2603f" stroke-width="2.2"/></svg>
<div class="t" style="left:308.5px;top:352px;font-size:27.5px;font-weight:bold;line-height:30px;transform:scaleX(1.06);transform-origin:0 0">3</div>
<div class="t" style="left:697.5px;top:351.5px;font-size:27.5px;font-weight:bold;line-height:30px;transform:scaleX(1.06);transform-origin:0 0">3</div>
<!-- /GRID -->
<!-- TOOLICONS -->
<svg style="left:150px;top:330px" width="30" height="24" viewBox="150 330 30 24">
<path d="M164.500 334l1.500 4.800 5.200.9-3.800 2.900 1.300 6.200-4-3.700-4.400 2 1.500-5-3.700-3.500 5-.2z" fill="#f9b71a" stroke="#e8901a" stroke-width=".5"/>
<path d="M164.300 335.500l1 4 3.500.5-4.500 1.800z" fill="#ffe25a"/>
<path d="M167.400 342.600l1.300 6.200-1.300-1.200z" fill="#e86a10"/>
</svg>
<svg style="left:905px;top:375px" width="70" height="30" viewBox="905 375 70 30"><defs>
<linearGradient id="fLabel" x1="0" y1="0" x2="0" y2="1"><stop offset="0" stop-color="#b8cce4"/><stop offset=".5" stop-color="#f4f8fc"/><stop offset="1" stop-color="#dce6f2"/></linearGradient>
<linearGradient id="fBody" x1="0" y1="0" x2="0" y2="1"><stop offset="0" stop-color="#5a5a5e"/><stop offset="1" stop-color="#1e1e22"/></linearGradient>
<linearGradient id="tBin" x1="0" y1="0" x2="0" y2="1"><stop offset="0" stop-color="#ee8a90"/><stop offset=".5" stop-color="#eeb4b8"/><stop offset="1" stop-color="#e9e6e6"/></linearGradient>
</defs>
<path d="M915 383h14v13.800h-13l-1-1z" fill="url(#fBody)"/>
<path d="M917.300 383h9.400v6.800h-9.400z" fill="url(#fLabel)"/>
<path d="M918.800 392.300h7v4.500h-7z" fill="#c8c8c8"/><path d="M919.800 393.200h2.300v3.600h-2.300z" fill="#222"/>
<path d="M946 383.300h12.600l-2 13.200h-8.600z" fill="url(#tBin)" opacity=".95"/>
<ellipse cx="952.300" cy="383.300" rx="6.300" ry="1" fill="#f0dcdc" stroke="#b09a9c" stroke-width=".5"/>
<path d="M950.800 388.200a2.300 2.300 0 1 1 1 4.300M950 390.500l2 1.500M953.800 388.600l-1.500 2" stroke="#2a50d8" stroke-width="1.100" fill="none"/>
<path d="M948.200 396.400h8.400" stroke="#8a8486" stroke-width="1"/>
</svg>
<!-- /TOOLICONS -->
<!-- ===== status ===== -->
<div class="a" style="left:5px;top:1089px;width:1234px;height:23px;background:#f0f0f0"></div>
</body></html>
